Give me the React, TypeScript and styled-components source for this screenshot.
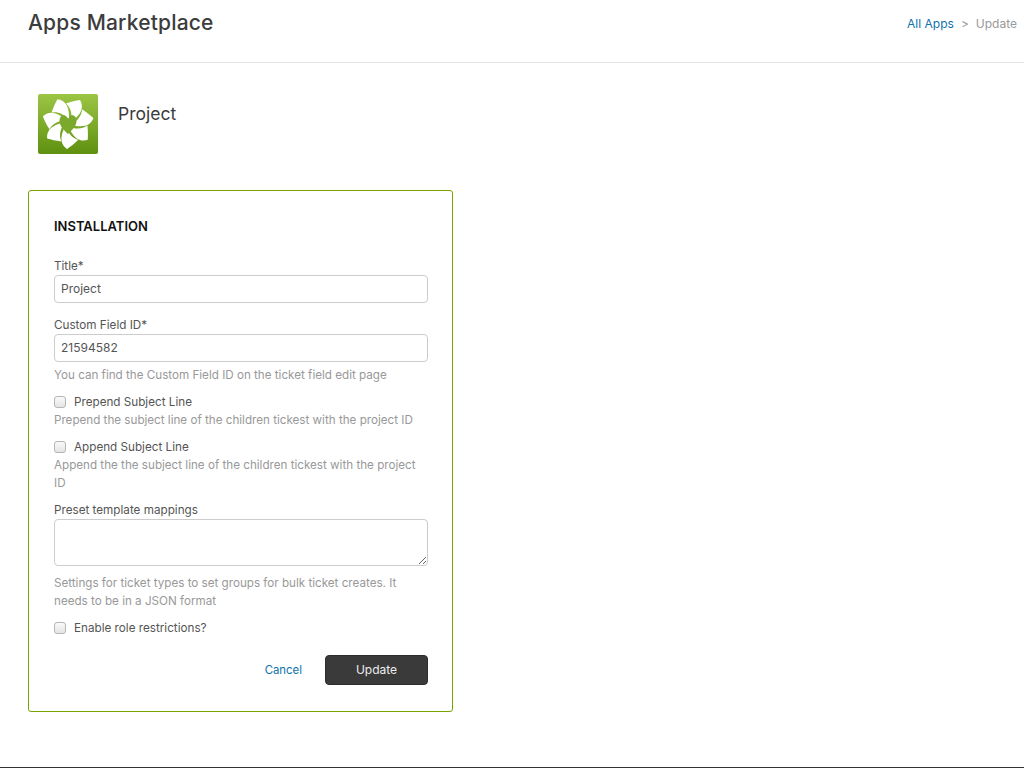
import * as React from "react";
import styled, { createGlobalStyle } from "styled-components";

const GlobalStyle = createGlobalStyle`
  html, body {
    margin: 0;
    padding: 0;
    background: #fff;
  }
  body {
    font-family: Inter, Lato, Arial, sans-serif;
    font-size: 12px;
    color: #555;
  }
  * {
    box-sizing: border-box;
  }
`;

const Page = styled.div`
  height: 768px;
  border-bottom: 1px solid #333;
  overflow: hidden;
`;

const Header = styled.header`
  height: 63px;
  border-bottom: 1px solid #e4e4e4;
  padding: 9px 7px 0 28px;
  display: flex;
  justify-content: space-between;
  align-items: flex-start;
`;

const Title = styled.h1`
  margin: 0;
  font-size: 21px;
  line-height: 27px;
  font-weight: 500;
  letter-spacing: 0.18px;
  color: #3c3c3c;
`;

const Crumbs = styled.nav`
  display: flex;
  gap: 7px;
  font-size: 12px;
  line-height: 29px;
  color: #999;
`;

const Link = styled.a`
  color: #0f72aa;
`;

const CancelLink = styled(Link)`
  font-size: 11.4px;
`;

const AppRow = styled.div`
  display: flex;
  gap: 20px;
  padding: 31px 0 0 38px;
`;

const AppName = styled.div`
  font-size: 17.5px;
  line-height: 24px;
  margin-top: 8px;
  color: #3c3c3c;
`;

const Card = styled.form`
  width: 425px;
  height: 522px;
  margin: 36px 0 0 28px;
  padding: 25px 24px 25px 25px;
  border: 1px solid #78a300;
  border-radius: 3px;
`;

const CardTitle = styled.h2`
  margin: 0 0 21px;
  font-size: 13px;
  line-height: 20px;
  font-weight: 600;
  color: #111;
`;

const Field = styled.div<{ $gap?: number }>`
  margin-bottom: ${(p) => p.$gap ?? 0}px;
`;

const Label = styled.label`
  display: block;
  font-size: 11.7px;
  line-height: 18px;
  color: #555;
`;

const Input = styled.input`
  display: block;
  width: 100%;
  height: 28px;
  padding: 0 6px 2px;
  border: 1px solid #ccc;
  border-radius: 4px;
  font: inherit;
  color: #555;
  outline: none;
`;

const TextArea = styled.textarea`
  display: block;
  width: 100%;
  height: 47px;
  border: 1px solid #ccc;
  border-radius: 4px;
  outline: none;
`;

const Hint = styled.p<{ $top?: number }>`
  margin: ${(p) => p.$top ?? 0}px 0 0;
  font-size: 11.65px;
  line-height: 18px;
  color: #999;
`;

const CheckRow = styled.label`
  display: flex;
  align-items: center;
  gap: 8px;
  height: 18px;
  padding-bottom: 1px;
  font-size: 11.7px;
  color: #555;
`;

const Check = styled.span`
  width: 12px;
  height: 12px;
  border: 1px solid #b5b5b5;
  border-radius: 3px;
  background: linear-gradient(#fafafa, #e4e4e4);
`;

const Actions = styled.div`
  display: flex;
  justify-content: flex-end;
  align-items: center;
  gap: 23px;
  margin-top: 18px;
`;

const Button = styled.button`
  width: 103px;
  height: 30px;
  padding: 0 0 2px;
  background: #3a3a3a;
  border: 1px solid #2d2d2d;
  border-radius: 4px;
  color: #eee;
  font: inherit;
`;

const petal = "M28 9.5 C33 7.8 38 6.6 42 6 C45.5 12 45 19.5 33 28 C34.5 20 33 14 28 9.5 Z";
const heart = "M30 40 C26.5 36.5 21.5 32.5 21.5 26.5 C21.5 22.5 24.5 20.5 27 21.5 C28.5 22.2 29.5 23.5 30 25 C30.5 23.5 31.5 22.2 33 21.5 C35.5 20.5 38.5 22.5 38.5 26.5 C38.5 32.5 33.5 36.5 30 40 Z";

function Logo() {
  return (
    <svg width="60" height="60" viewBox="0 0 60 60">
      <defs>
        <linearGradient id="logoBg" x1="0" y1="0" x2="0" y2="1">
          <stop offset="0" stopColor="#9cc544" />
          <stop offset="1" stopColor="#5f9010" />
        </linearGradient>
      </defs>
      <rect width="60" height="60" rx="2" fill="url(#logoBg)" />
      {[0, 1, 2, 3, 4, 5, 6].map((i) => (
        <path key={i} d={petal} fill="#fff" transform={`rotate(${(i * 360) / 7} 30 29)`} />
      ))}
      <path d={heart} fill="#7ba92c" />
    </svg>
  );
}

export default function App() {
  return (
    <Page>
      <GlobalStyle />
      <Header>
        <Title>Apps Marketplace</Title>
        <Crumbs>
          <Link>All Apps</Link>
          <span>&gt;</span>
          <span>Update</span>
        </Crumbs>
      </Header>
      <AppRow>
        <Logo />
        <AppName>Project</AppName>
      </AppRow>
      <Card>
        <CardTitle>INSTALLATION</CardTitle>
        <Field $gap={13}>
          <Label>Title*</Label>
          <Input defaultValue="Project" />
        </Field>
        <Field $gap={9}>
          <Label>Custom Field ID*</Label>
          <Input defaultValue="21594582" />
          <Hint $top={4}>You can find the Custom Field ID on the ticket field edit page</Hint>
        </Field>
        <Field $gap={9}>
          <CheckRow><Check />Prepend Subject Line</CheckRow>
          <Hint>Prepend the subject line of the children tickest with the project ID</Hint>
        </Field>
        <Field $gap={9}>
          <CheckRow><Check />Append Subject Line</CheckRow>
          <Hint>Append the the subject line of the children tickest with the project ID</Hint>
        </Field>
        <Field $gap={9}>
          <Label>Preset template mappings</Label>
          <TextArea />
          <Hint $top={8}>Settings for ticket types to set groups for bulk ticket creates. It needs to be in a JSON format</Hint>
        </Field>
        <CheckRow><Check />Enable role restrictions?</CheckRow>
        <Actions>
          <CancelLink>Cancel</CancelLink>
          <Button type="button">Update</Button>
        </Actions>
      </Card>
    </Page>
  );
}
